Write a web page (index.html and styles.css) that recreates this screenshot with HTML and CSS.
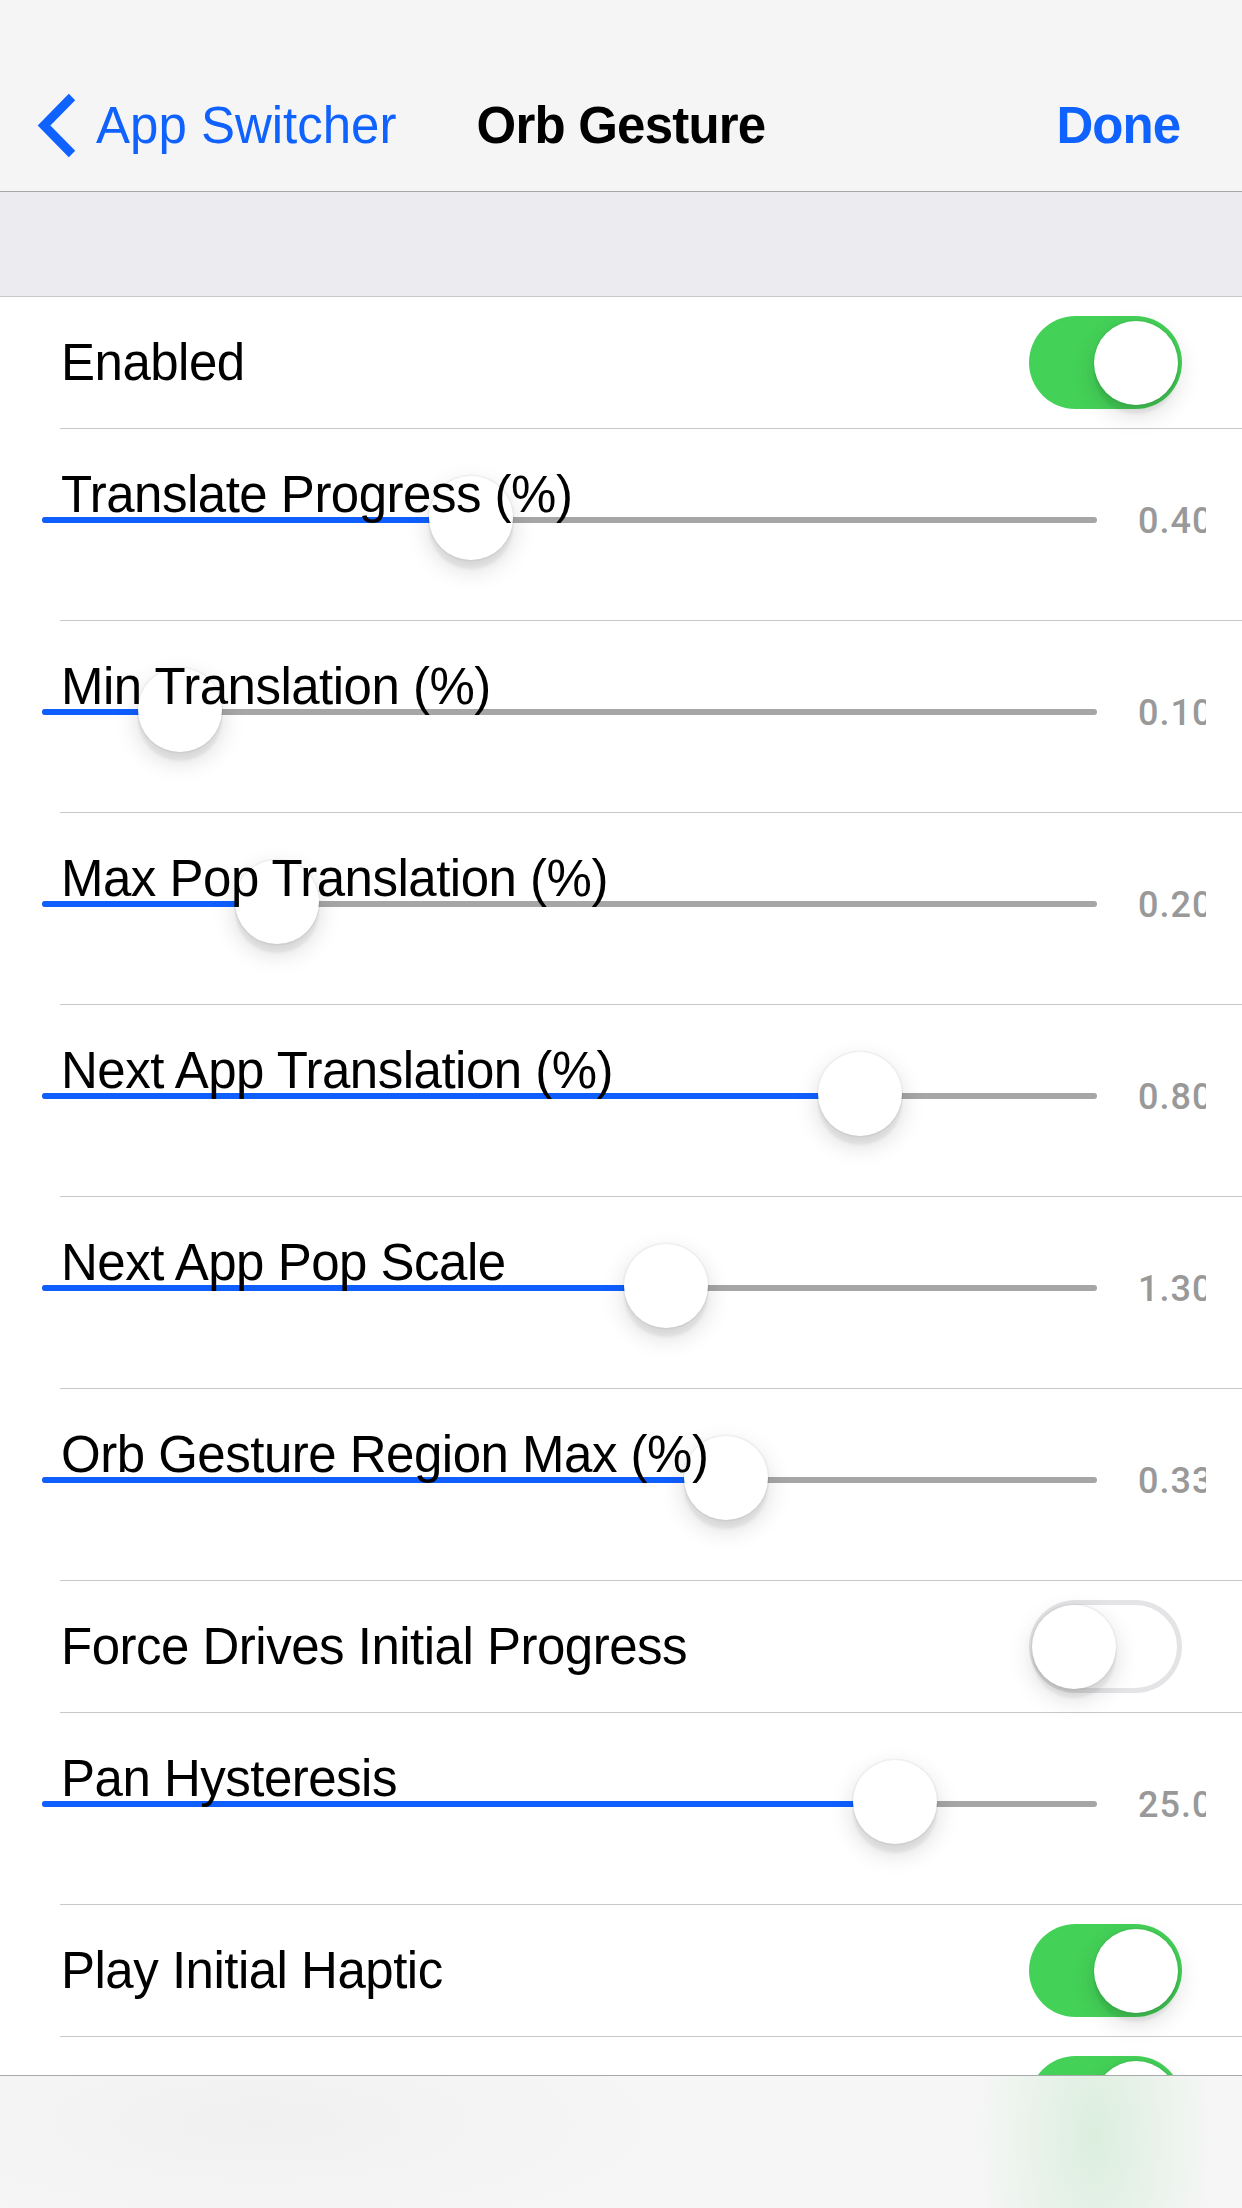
FILE: index.html
```html
<!DOCTYPE html>
<html lang="en">
<head>
<meta charset="utf-8">
<title>Orb Gesture</title>
<link rel="stylesheet" href="styles.css">
</head>
<body>
<header class="nav">
  <div class="nav-bar">
    <div class="nav-left">
      <svg class="chevron" width="39" height="63" viewBox="0 0 39 63" aria-hidden="true">
        <polyline points="35,3 7,31.5 35,60" fill="none" stroke="currentColor" stroke-width="9" stroke-linecap="butt" stroke-linejoin="miter"/>
      </svg>
      <span class="back-label">App Switcher</span>
    </div>
    <div class="nav-title">Orb Gesture</div>
    <div class="nav-right"><span class="done">Done</span></div>
  </div>
</header>
<div class="section-gap"></div>
<ul class="table">
  <li class="row toggle-row">
    <span class="label">Enabled</span>
    <span class="switch on"><span class="knob"></span></span>
  </li>
  <li class="row slider-row">
    <span class="slider-label">Translate Progress (%)</span>
    <div class="slider"><div class="fill" style="width:429px"></div><div class="thumb" style="left:429px"></div></div>
    <span class="value">0.40</span>
  </li>
  <li class="row slider-row">
    <span class="slider-label">Min Translation (%)</span>
    <div class="slider"><div class="fill" style="width:138px"></div><div class="thumb" style="left:138px"></div></div>
    <span class="value">0.10</span>
  </li>
  <li class="row slider-row">
    <span class="slider-label">Max Pop Translation (%)</span>
    <div class="slider"><div class="fill" style="width:235px"></div><div class="thumb" style="left:235px"></div></div>
    <span class="value">0.20</span>
  </li>
  <li class="row slider-row">
    <span class="slider-label">Next App Translation (%)</span>
    <div class="slider"><div class="fill" style="width:818px"></div><div class="thumb" style="left:818px"></div></div>
    <span class="value">0.80</span>
  </li>
  <li class="row slider-row">
    <span class="slider-label">Next App Pop Scale</span>
    <div class="slider"><div class="fill" style="width:624px"></div><div class="thumb" style="left:624px"></div></div>
    <span class="value">1.30</span>
  </li>
  <li class="row slider-row">
    <span class="slider-label">Orb Gesture Region Max (%)</span>
    <div class="slider"><div class="fill" style="width:684px"></div><div class="thumb" style="left:684px"></div></div>
    <span class="value">0.33</span>
  </li>
  <li class="row toggle-row">
    <span class="label">Force Drives Initial Progress</span>
    <span class="switch off"><span class="knob"></span></span>
  </li>
  <li class="row slider-row">
    <span class="slider-label">Pan Hysteresis</span>
    <div class="slider"><div class="fill" style="width:853px"></div><div class="thumb" style="left:853px"></div></div>
    <span class="value">25.0</span>
  </li>
  <li class="row toggle-row">
    <span class="label">Play Initial Haptic</span>
    <span class="switch on"><span class="knob"></span></span>
  </li>
  <li class="row toggle-row">
    <span class="label"></span>
    <span class="switch on"><span class="knob"></span></span>
  </li>
</ul>
<footer class="toolbar"></footer>
</body>
</html>
```
FILE: styles.css
```css
* { box-sizing: border-box; }

html, body {
  margin: 0;
  padding: 0;
  background: #ffffff;
}

body {
  width: 1242px;
  font-family: "Liberation Sans", Arial, sans-serif;
  color: #000;
  -webkit-font-smoothing: antialiased;
}

/* ---------- navigation bar ---------- */
.nav {
  height: 192px;
  padding-top: 60px;
  background: #f5f5f5;
  border-bottom: 1px solid #a7a7aa;
}

.nav-bar {
  height: 131px;
  display: grid;
  grid-template-columns: 1fr auto 1fr;
  align-items: center;
  font-size: 51px;
  line-height: 58px;
}

.nav-left {
  display: flex;
  align-items: center;
  gap: 20px;
  padding-left: 37px;
  color: #0f62fe;
}

.chevron {
  display: block;
  overflow: visible;
}

.back-label {
  letter-spacing: 0;
}

.nav-title {
  font-weight: 700;
  letter-spacing: -0.8px;
}

.nav-right {
  display: flex;
  justify-content: flex-end;
  padding-right: 62px;
}

.done {
  color: #0f62fe;
  font-weight: 700;
  letter-spacing: -1px;
}

/* ---------- grouped section gap ---------- */
.section-gap {
  height: 105px;
  background: #ebebf0;
  border-bottom: 1px solid #c8c7cc;
}

/* ---------- table ---------- */
.table {
  list-style: none;
  margin: 0;
  padding: 0;
}

.row {
  background:
    linear-gradient(#c8c7cc, #c8c7cc) no-repeat 60px 100% / calc(100% - 60px) 1px,
    #ffffff;
}

.toggle-row {
  height: 132px;
  padding: 0 60px 1px 61px;
  display: flex;
  align-items: center;
  justify-content: space-between;
}

.label {
  font-size: 51px;
  line-height: 58px;
  letter-spacing: -0.5px;
}

/* ---------- switch ---------- */
.switch {
  width: 153px;
  height: 93px;
  border-radius: 47px;
  padding: 4.5px;
  display: flex;
  align-items: center;
}

.switch.on {
  background: #44d158;
  justify-content: flex-end;
}

.switch.off {
  background: #ffffff;
  box-shadow: inset 0 0 0 5px #e4e4e6;
  justify-content: flex-start;
  padding: 4.5px 4.5px 4.5px 3px;
}

.knob {
  width: 84px;
  height: 84px;
  border-radius: 50%;
  background: #ffffff;
  box-shadow:
    0 9px 24px rgba(0, 0, 0, 0.15),
    0 9px 3px rgba(0, 0, 0, 0.06),
    0 0 0 1.5px rgba(0, 0, 0, 0.04);
}

/* ---------- slider rows ---------- */
.slider-row {
  height: 192px;
  padding-left: 42px;
  display: grid;
  grid-template-columns: 1055px 68px;
  column-gap: 41px;
  align-items: start;
}

.slider-label {
  grid-column: 1;
  grid-row: 1;
  margin: 37px 0 0 19px;
  font-size: 51px;
  line-height: 58px;
  letter-spacing: -0.5px;
  position: relative;
  z-index: 2;
  white-space: nowrap;
}

.slider {
  grid-column: 1;
  grid-row: 1;
  margin-top: 88px;
  height: 6px;
  border-radius: 3px;
  background: #a6a6a6;
  position: relative;
}

.fill {
  height: 6px;
  border-radius: 3px 0 0 3px;
  background: #0f5fff;
}

.thumb {
  position: absolute;
  top: 1px;
  width: 84px;
  height: 84px;
  margin-left: -42px;
  margin-top: -42px;
  border-radius: 50%;
  background: #ffffff;
  box-shadow:
    0 9px 24px rgba(0, 0, 0, 0.15),
    0 9px 3px rgba(0, 0, 0, 0.06),
    0 0 0 1.5px rgba(0, 0, 0, 0.04);
}

.value {
  grid-column: 2;
  grid-row: 1;
  margin-top: 71px;
  font-family: Roboto, "Liberation Sans", sans-serif;
  font-weight: 500;
  font-size: 36px;
  line-height: 42px;
  letter-spacing: 1px;
  color: #999999;
  white-space: nowrap;
  overflow: hidden;
}

.toolbar {
  position: fixed;
  left: 0;
  right: 0;
  bottom: 0;
  height: 133px;
  border-top: 1px solid #a9a9ab;
  background:
    radial-gradient(ellipse 120px 240px at 1095px 45%, rgba(150, 220, 160, 0.28), rgba(150, 220, 160, 0) 100%),
    radial-gradient(ellipse 420px 120px at 260px 35%, rgba(0, 0, 0, 0.025), rgba(0, 0, 0, 0) 100%),
    #f6f6f6;
}
```
